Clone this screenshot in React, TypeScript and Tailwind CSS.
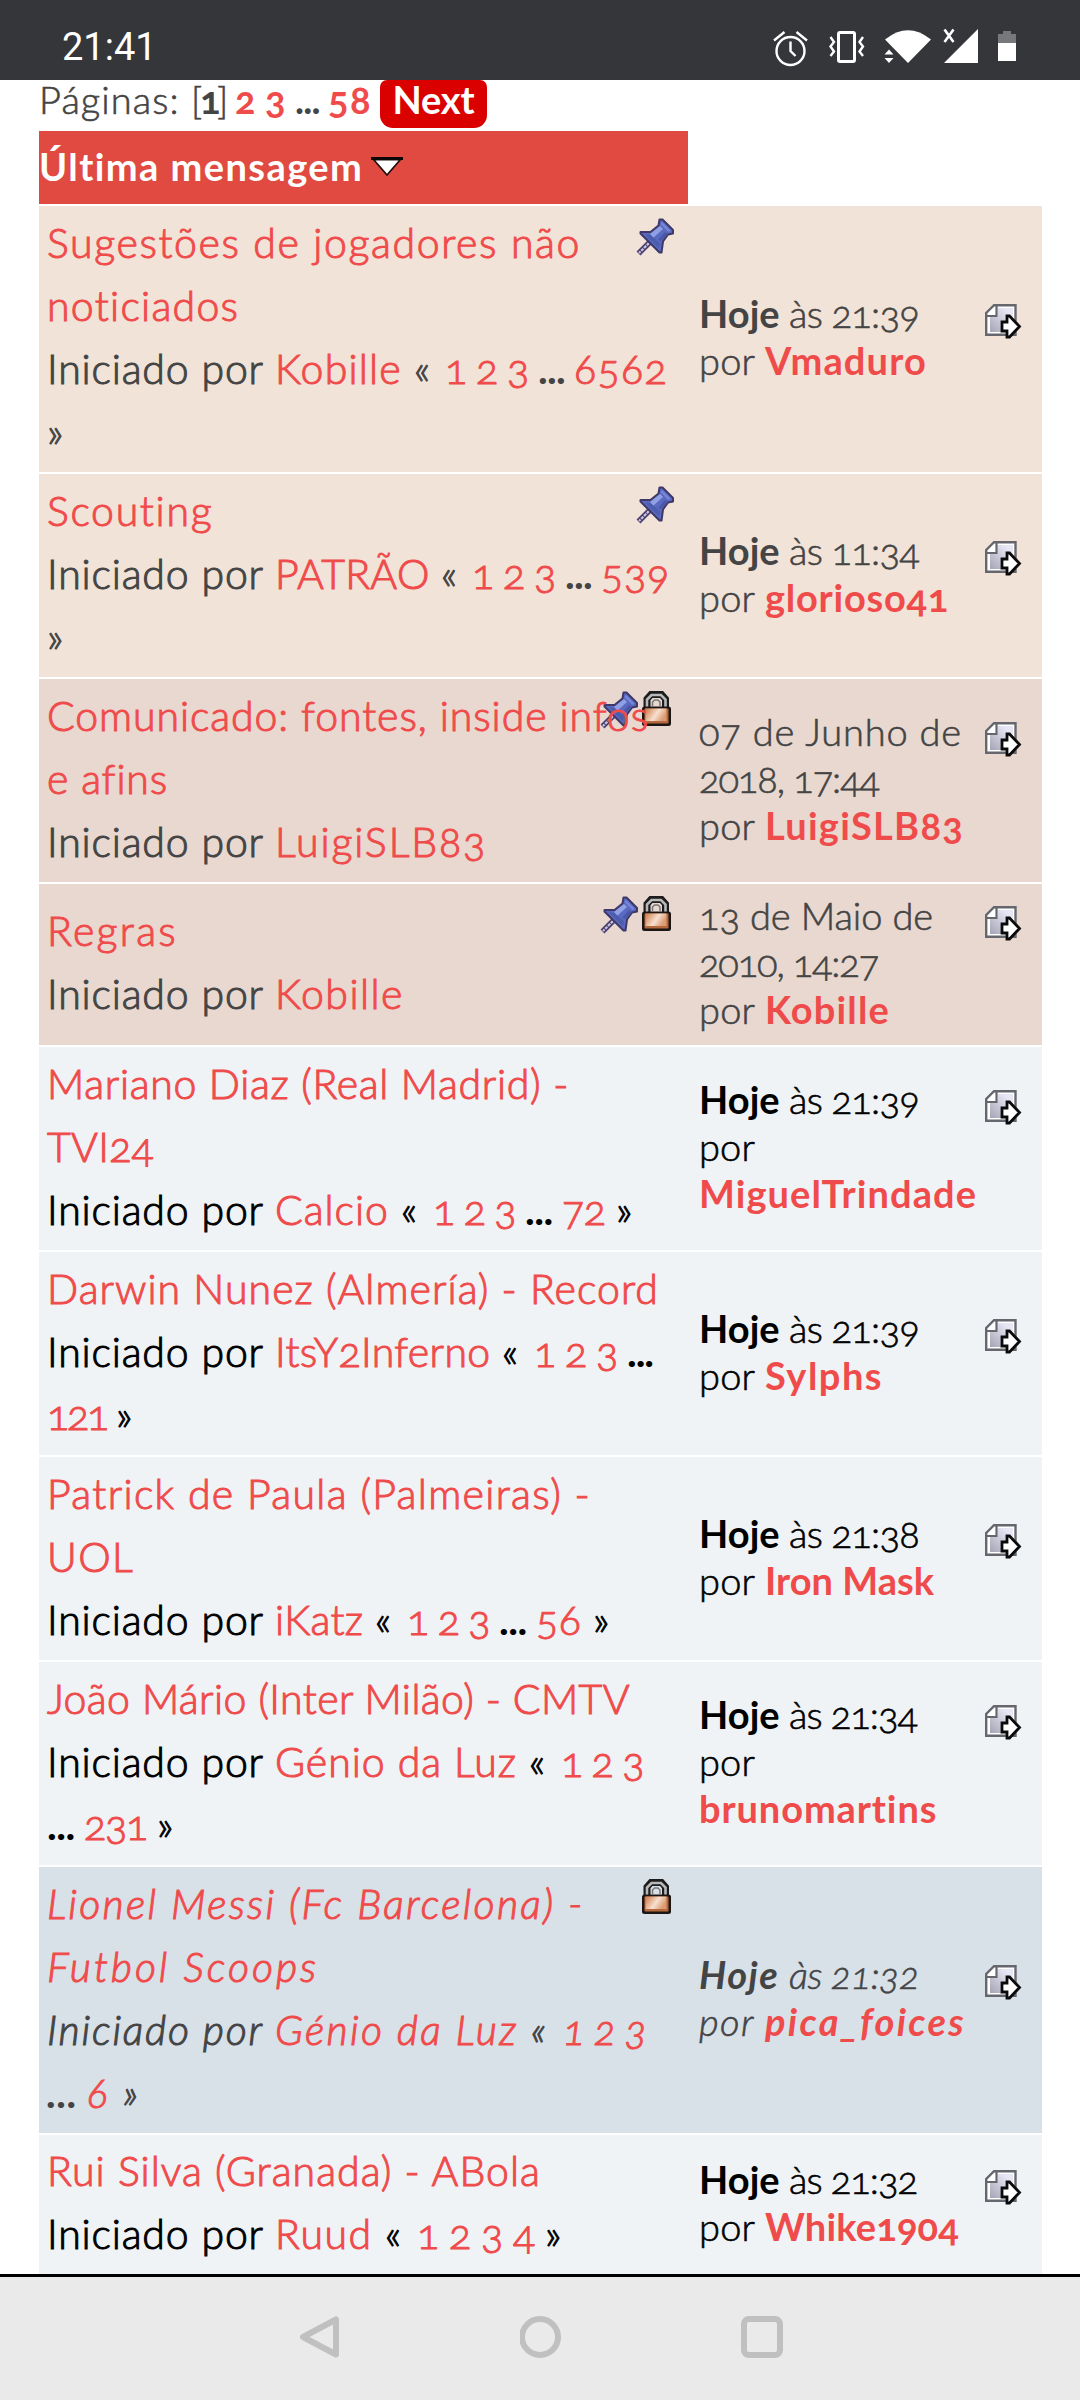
import { useLayoutEffect, useRef } from "react";
import { clsx } from "clsx";

type Kind = "text" | "link" | "bold" | "user";
// text, advance width in px, kind
type Run = [string, number, Kind?];

interface Topic {
  id: string;
  height: string;
  bg: string;
  dim?: boolean;
  italic?: boolean;
  pinned?: boolean;
  locked?: boolean;
  title: Run[][];
  last: Run[][];
}

const started: Run = ["Iniciado por ", 228];
const today = (time: string, width = 130): Run[] => [
  ["Hoje ", 90, "bold"],
  [`às ${time}`, width],
];
const by: Run = ["por ", 66];

const topics: Topic[] = [
  {
    id: "sugestoes",
    height: "h-[266px]",
    bg: "bg-[#f1e3d8]",
    dim: true,
    pinned: true,
    title: [
      [["Sugestões de jogadores não", 534, "link"]],
      [["noticiados", 193, "link"]],
      [
        started,
        ["Kobille ", 139, "link"],
        ["« ", 31],
        ["1 2 3 ", 93, "link"],
        ["... ", 36, "bold"],
        ["6562", 94, "link"],
      ],
      [["»", 25]],
    ],
    last: [today("21:39"), [by, ["Vmaduro", 162, "user"]]],
  },
  {
    id: "scouting",
    height: "h-[203px]",
    bg: "bg-[#f1e3d8]",
    dim: true,
    pinned: true,
    title: [
      [["Scouting", 167, "link"]],
      [
        started,
        ["PATRÃO ", 166, "link"],
        ["« ", 31],
        ["1 2 3 ", 93, "link"],
        ["... ", 36, "bold"],
        ["539", 69, "link"],
      ],
      [["»", 25]],
    ],
    last: [today("11:34"), [by, ["glorioso41", 184, "user"]]],
  },
  {
    id: "comunicado",
    height: "h-[203px]",
    bg: "bg-[#e8d8d0]",
    dim: true,
    pinned: true,
    locked: true,
    title: [
      [["Comunicado: fontes, inside infos", 602, "link"]],
      [["e afins", 120, "link"]],
      [started, ["LuigiSLB83", 212, "link"]],
    ],
    last: [
      [["07 de Junho de", 263]],
      [["2018, 17:44", 180]],
      [by, ["LuigiSLB83", 199, "user"]],
    ],
  },
  {
    id: "regras",
    height: "h-[161px]",
    bg: "bg-[#e8d8d0]",
    dim: true,
    pinned: true,
    locked: true,
    title: [[["Regras", 131, "link"]], [started, ["Kobille", 129, "link"]]],
    last: [
      [["13 de Maio de", 234]],
      [["2010, 14:27", 179]],
      [by, ["Kobille", 125, "user"]],
    ],
  },
  {
    id: "mariano",
    height: "h-[203px]",
    bg: "bg-[#eff3f6]",
    title: [
      [["Mariano Diaz (Real Madrid) -", 522, "link"]],
      [["TVI24", 107, "link"]],
      [
        started,
        ["Calcio ", 126, "link"],
        ["« ", 32],
        ["1 2 3 ", 92, "link"],
        ["... ", 37, "bold"],
        ["72 ", 54, "link"],
        ["»", 25],
      ],
    ],
    last: [today("21:39"), [["por", 56]], [["MiguelTrindade", 278, "user"]]],
  },
  {
    id: "darwin",
    height: "h-[203px]",
    bg: "bg-[#eff3f6]",
    title: [
      [["Darwin Nunez (Almería) - Record", 612, "link"]],
      [
        started,
        ["ItsY2Inferno ", 227, "link"],
        ["« ", 32],
        ["1 2 3 ", 93, "link"],
        ["...", 26, "bold"],
      ],
      [
        ["121 ", 69, "link"],
        ["»", 25],
      ],
    ],
    last: [today("21:39"), [by, ["Sylphs", 118, "user"]]],
  },
  {
    id: "patrick",
    height: "h-[203px]",
    bg: "bg-[#eff3f6]",
    title: [
      [["Patrick de Paula (Palmeiras) -", 544, "link"]],
      [["UOL", 87, "link"]],
      [
        started,
        ["iKatz ", 100, "link"],
        ["« ", 32],
        ["1 2 3 ", 92, "link"],
        ["... ", 37, "bold"],
        ["56 ", 57, "link"],
        ["»", 25],
      ],
    ],
    last: [today("21:38"), [by, ["Iron Mask", 169, "user"]]],
  },
  {
    id: "joao",
    height: "h-[203px]",
    bg: "bg-[#eff3f6]",
    title: [
      [["João Mário (Inter Milão) - CMTV", 583, "link"]],
      [started, ["Génio da Luz ", 254, "link"], ["« ", 32], ["1 2 3", 82, "link"]],
      [
        ["... ", 37, "bold"],
        ["231 ", 73, "link"],
        ["»", 25],
      ],
    ],
    last: [today("21:34", 128), [["por", 56]], [["brunomartins", 239, "user"]]],
  },
  {
    id: "messi",
    height: "h-[266px]",
    bg: "bg-[#d8e0e8]",
    dim: true,
    italic: true,
    locked: true,
    title: [
      [["Lionel Messi (Fc Barcelona) -", 538, "link"]],
      [["Futbol Scoops", 272, "link"]],
      [started, ["Génio da Luz ", 256, "link"], ["« ", 32], ["1 2 3", 83, "link"]],
      [
        ["... ", 40, "bold"],
        ["6 ", 36, "link"],
        ["»", 25],
      ],
    ],
    last: [today("21:32"), [by, ["pica_foices", 201, "user"]]],
  },
  {
    id: "rui",
    height: "h-[139px]",
    bg: "bg-[#eff3f6]",
    title: [
      [["Rui Silva (Granada) - ABola", 494, "link"]],
      [
        started,
        ["Ruud ", 110, "link"],
        ["« ", 32],
        ["1 2 3 4 ", 128, "link"],
        ["»", 25],
      ],
    ],
    last: [today("21:32", 128), [by, ["Whike1904", 194, "user"]]],
  },
];

// Spreads its letters so that the run takes exactly `width` pixels.
function FittedRun({ run: [text, width, kind = "text"] }: { run: Run }) {
  const ref = useRef<HTMLSpanElement>(null);

  useLayoutEffect(() => {
    const el = ref.current;
    if (!el) return;
    el.style.letterSpacing = "0px";
    const natural = el.getBoundingClientRect().width;
    el.style.letterSpacing = `${(width - natural) / text.length}px`;
  }, [text, width]);

  return (
    <span
      ref={ref}
      className={clsx(
        "whitespace-pre",
        (kind === "link" || kind === "user") && "text-[#f04b4b]",
        (kind === "bold" || kind === "user") &&
          "font-bold [-webkit-text-stroke:0px]",
      )}
    >
      {text}
    </span>
  );
}

function Lines({ lines, className }: { lines: Run[][]; className: string }) {
  return (
    <div className={className}>
      {lines.map((line, i) => (
        <div key={i} className="flex">
          {line.map((run, j) => (
            <FittedRun key={j} run={run} />
          ))}
        </div>
      ))}
    </div>
  );
}

function PinIcon() {
  return (
    <svg width="38" height="38" viewBox="0 0 38 38">
      <path d="M14 24 2.5 35.500" stroke="#4a3d70" strokeWidth="5.500" />
      <path
        d="M13 25 3 35"
        stroke="#c9c6dc"
        strokeWidth="2.200"
        strokeDasharray="3 1"
      />
      <path
        d="M23.500 1.500h3l10.500 10.500v3.500l-5 1-5 7-1.500 11h-2L4.500 15.500v-1.500h10l8-6.500z"
        fill="#5a6ac0"
        stroke="#403868"
        strokeWidth="2"
        strokeLinejoin="round"
      />
      <path d="m14 16 10-8 3 3-10 9z" fill="#8fa0e4" />
      <path d="m26 4 8.500 8.500-2 1.500-8-8z" fill="#7686d8" />
      <path d="m9 16.500 14 14 1-5-10-9z" fill="#4c5cae" />
      <path d="m22 22 7-8 3 2-7 7z" fill="#4a58a8" />
    </svg>
  );
}

function LockIcon() {
  return (
    <svg width="31" height="36" viewBox="0 0 31 36">
      <defs>
        <linearGradient id="brass" x1="0" x2="1" y1="0" y2="0.400">
          <stop offset="0.100" stopColor="#d68a5c" />
          <stop offset="0.600" stopColor="#f7e0d0" />
          <stop offset="1" stopColor="#dc9b72" />
        </linearGradient>
      </defs>
      <path
        d="M6 18V8l4-4.500h10.500l4 4.500v10"
        fill="none"
        stroke="#1c1c1c"
        strokeWidth="7"
      />
      <path
        d="M6 17V8.500L10.500 4h9.500L24.500 8.500V17"
        fill="none"
        stroke="#b9b9b9"
        strokeWidth="2.600"
      />
      <path
        d="M11.500 15v-4l2-2h3.500l2 2v4"
        fill="none"
        stroke="#777"
        strokeWidth="1.500"
      />
      <rect x="1" y="15.500" width="29" height="19.500" rx="2.500" fill="#1c1715" />
      <rect x="3.500" y="17.500" width="24" height="15" rx="1" fill="#b5693c" />
      <rect x="4.500" y="17.500" width="21" height="12.500" fill="url(#brass)" />
    </svg>
  );
}

function LastPostIcon() {
  return (
    <svg width="37" height="35" viewBox="0 0 37 35">
      <defs>
        <linearGradient id="sheet" x1="1" x2="0" y1="0" y2="1">
          <stop offset="0.200" stopColor="#e6e6f5" />
          <stop offset="1" stopColor="#a4a4b4" />
        </linearGradient>
      </defs>
      <path
        d="M9 1.200h21.500v29.600H1.200V9z"
        fill="#fff"
        stroke="#66666e"
        strokeWidth="2.400"
      />
      <path d="M12.500 4H28v24H5V13h7.500z" fill="url(#sheet)" />
      <path d="M11.500 2v10H2" fill="none" stroke="#66666e" strokeWidth="2.200" />
      <path
        d="M17 18h5v-6h2.500L34.500 22.500 24.500 33H22v-6h-5z"
        fill="#fff"
        stroke="#0b0b0b"
        strokeWidth="2.800"
      />
    </svg>
  );
}

function StatusBar() {
  return (
    <header className="flex h-20 shrink-0 items-start justify-between bg-[#35363a] pr-[62px] pl-[62px] text-white">
      <span className="mt-[24px] font-['Roboto'] text-[38px] leading-[46px] lining-nums">
        21:41
      </span>
      <svg width="245" height="40" viewBox="0 0 245 40" className="mt-[27px]">
        {/* alarm */}
        <g fill="none" stroke="#fff" strokeWidth="2.400">
          <circle cx="17.500" cy="24" r="14" />
          <path d="M17.500 14.500v9.500l5 5M1 13.500 11.500 5M34 13.500 23.500 5" />
        </g>
        {/* vibrate */}
        <g fill="none" stroke="#fff" strokeWidth="2.400">
          <rect x="65.500" y="5.500" width="16" height="29" rx="1.500" strokeWidth="3" />
          <path d="m57.500 10 3.500 5-3.500 4.500 3.500 5-3.500 4.500M90 10 86.500 15l3.500 4.500-3.500 5 3.500 4.500" />
        </g>
        {/* wifi */}
        <path d="M112 12.500Q135-6 158 12.500L135 36z" fill="#fff" />
        <path d="m111.500 27.500 4.500-5 4.500 5zM111.500 31l4.500 5 4.500-5z" fill="#fff" />
        {/* signal */}
        <path d="M205 2v34h-34z" fill="#fff" />
        <path
          d="m171.500 2.500 9 12.500M180.500 2.500l-9 12.500"
          stroke="#fff"
          strokeWidth="2.600"
        />
        {/* battery */}
        <path d="M230 4h8v3h5v10h-18V7h5z" fill="#77787b" />
        <path d="M225 16h18v18h-18z" fill="#fff" />
      </svg>
    </header>
  );
}

function Pagination() {
  return (
    <nav className="flex h-[51px] items-start pl-[39px] text-[38px] leading-[38px] text-[#444]">
      <div className="flex font-light [-webkit-text-stroke:0.600px]">
        <FittedRun run={["Páginas: ", 152]} />
        <FittedRun run={["[", 9]} />
        <FittedRun run={["1", 17, "bold"]} />
        <FittedRun run={["]", 9]} />
        <FittedRun run={[" ", 9]} />
        <FittedRun run={["2 ", 30, "user"]} />
        <FittedRun run={["3 ", 30, "user"]} />
        <FittedRun run={["... ", 33, "bold"]} />
        <FittedRun run={["58", 44, "user"]} />
      </div>
      <a className="ml-[8px] flex h-[48px] w-[107px] justify-center rounded-t-[7px] rounded-b-[13px] bg-[#db0000] text-white">
        <FittedRun run={["Next", 82, "bold"]} />
      </a>
    </nav>
  );
}

function TopicRow({ topic }: { topic: Topic }) {
  return (
    <div
      className={clsx(
        "flex shrink-0",
        topic.height,
        topic.bg,
        topic.dim ? "text-[#444]" : "text-black",
        topic.italic && "italic",
      )}
    >
      <div className="relative flex w-[660px] items-center pb-[5px] pl-[8px]">
        <div
          className={clsx(
            "absolute top-[12px] flex gap-[3px]",
            topic.locked ? "right-[27px]" : "right-[25px]",
          )}
        >
          {topic.pinned && <PinIcon />}
          {topic.locked && <LockIcon />}
        </div>
        <Lines
          lines={topic.title}
          className="relative text-[41px] leading-[63px] font-light [-webkit-text-stroke:1px]"
        />
      </div>
      <div className="flex flex-1 items-center pb-[4px]">
        <div className="flex w-[323px] justify-between">
          <Lines
            lines={topic.last}
            className="text-[38px] leading-[47px] font-light [-webkit-text-stroke:0.600px]"
          />
          <div className="mt-[14px]">
            <LastPostIcon />
          </div>
        </div>
      </div>
    </div>
  );
}

function NavigationBar() {
  return (
    <footer className="h-[126px] shrink-0 border-t-[3px] border-black bg-[#eaeaea]">
      <div className="mt-[38px] ml-[299px] flex w-[484px] justify-between">
        <svg width="42" height="44" viewBox="0 0 42 44">
          <path
            d="M37 4.500v35L4 22z"
            fill="none"
            stroke="#c0c0c0"
            strokeWidth="6"
            strokeLinejoin="round"
          />
        </svg>
        <svg width="42" height="44" viewBox="0 0 42 44">
          <circle
            cx="20"
            cy="22"
            r="18"
            fill="none"
            stroke="#c0c0c0"
            strokeWidth="6"
          />
        </svg>
        <svg width="42" height="44" viewBox="0 0 42 44">
          <rect
            x="3"
            y="4"
            width="36"
            height="36"
            rx="5"
            fill="none"
            stroke="#c0c0c0"
            strokeWidth="6"
          />
        </svg>
      </div>
    </footer>
  );
}

export default function App() {
  return (
    <div className="flex h-[2400px] w-[1080px] flex-col bg-white font-['Lato',sans-serif] oldstyle-nums">
      <StatusBar />
      <main className="flex h-[2194px] flex-col">
        <Pagination />
        <section className="ml-[39px] flex w-[1003px] flex-col gap-[2px]">
          <div className="flex h-[73px] w-[649px] shrink-0 items-center bg-[#e04a40] pb-[4px] text-[38px] leading-[46px] text-white">
            <FittedRun run={["Última mensagem", 325, "bold"]} />
            <svg
              width="32"
              height="21"
              viewBox="0 0 32 21"
              className="mt-[3px] ml-[8px]"
            >
              <path
                d="M2.500 2.500h27L16 18z"
                fill="#fff"
                stroke="#24100e"
                strokeWidth="1.800"
              />
              <path d="M0 0h32v3H0z" fill="#0d0807" />
            </svg>
          </div>
          {topics.map((topic) => (
            <TopicRow key={topic.id} topic={topic} />
          ))}
        </section>
      </main>
      <NavigationBar />
    </div>
  );
}
